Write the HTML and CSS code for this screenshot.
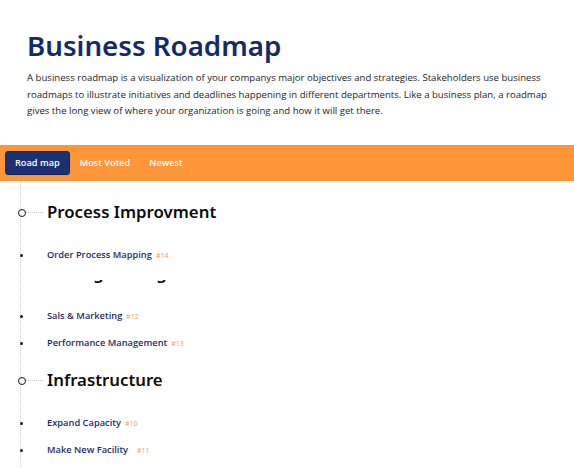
FILE: index.html
```html
<!DOCTYPE html>
<html lang="en">
<head>
<meta charset="utf-8">
<title>Business Roadmap</title>
<link rel="stylesheet" href="styles.css">
</head>
<body>
<header class="intro">
  <h1 class="intro-title">Business Roadmap</h1>
  <p class="intro-text">A business roadmap is a visualization of your companys major objectives and strategies. Stakeholders use business roadmaps to illustrate initiatives and deadlines happening in different departments. Like a business plan, a roadmap gives the long view of where your organization is going and how it will get there.</p>
</header>
<nav class="tabs">
  <a class="tab tab-active" href="#">Road map</a>
  <a class="tab" href="#">Most Voted</a>
  <a class="tab" href="#">Newest</a>
</nav>
<main class="roadmap">
  <section class="group">
    <h2 class="group-title">Process Improvment</h2>
    <ul class="items">
      <li class="item"><a class="item-link" href="#">Order Process Mapping</a><span class="item-num">#14</span></li>
    </ul>
  </section>
  <section class="group group-covered">
    <h2 class="group-title">Pricing Settings</h2>
    <ul class="items">
      <li class="item"><a class="item-link" href="#">Sals &amp; Marketing</a><span class="item-num">#12</span></li>
      <li class="item"><a class="item-link" href="#">Performance Management</a><span class="item-num">#13</span></li>
    </ul>
  </section>
  <section class="group">
    <h2 class="group-title">Infrastructure</h2>
    <ul class="items">
      <li class="item"><a class="item-link" href="#">Expand Capacity</a><span class="item-num">#10</span></li>
      <li class="item"><a class="item-link" href="#">Make New Facility</a><span class="item-num item-num-wide">#11</span></li>
    </ul>
  </section>
</main>
</body>
</html>
```
FILE: styles.css
```css
* { box-sizing: border-box; }
html, body { margin: 0; padding: 0; background: #fff; }
body { font-family: "Open Sans", "Liberation Sans", sans-serif; color: #222; overflow: hidden; }

.intro { padding: 28px 27px 0 27px; }
.intro-title {
  margin: 0;
  font-family: "Noto Sans", sans-serif;
  font-weight: 600;
  font-size: 27.7px;
  line-height: 34px;
  color: #132b6b;
}
.intro-text {
  margin: 8px 0 0 0;
  font-size: 9.6px;
  line-height: 16.5px;
  color: #1e1e1e;
  max-width: 532px;
}

.tabs {
  margin-top: 25px;
  background: #fd9539;
  padding: 6px 5px;
  display: flex;
  gap: 1px;
  height: 36px;
}
.tab {
  display: flex;
  align-items: center;
  height: 24px;
  padding: 0 9px;
  color: #fff;
  text-decoration: none;
  font-size: 9.2px;
  font-weight: 600;
  border-radius: 3px;
}
.tab-active { background: #1c3174; border: 1px solid #13255c; }

.roadmap {
  margin-left: 20px;
  border-left: 1px dotted #d4d4d4;
  padding-top: 19px;
  padding-left: 26px;
  min-height: 300px;
}
.group { margin-top: 17px; }
.group:first-child { margin-top: 0; }
.group-title {
  position: relative;
  margin: 0;
  font-family: "Noto Sans", sans-serif;
  font-weight: 600;
  font-size: 16.8px;
  line-height: 24px;
  color: #0c0c0c;
}
.group-title::before {
  content: "";
  position: absolute;
  left: -29px;
  top: 9px;
  width: 6px;
  height: 6px;
  border: 1.5px solid #111;
  border-radius: 50%;
  background: #fff;
}
.group-title::after {
  content: "";
  position: absolute;
  left: -23px;
  top: 12px;
  width: 19px;
  border-top: 1px dotted #cfcfcf;
}
.group-covered { margin-top: -2px; }
.group-covered .group-title::before {
  left: -25px; top: 0; width: 300px; height: 19px;
  border: 0; border-radius: 0; background: #fff;
}
.group-covered .group-title::after { display: none; }

.items {
  list-style: none;
  margin: 23px 0 0 0;
  padding: 0;
  display: flex;
  flex-direction: column;
  gap: 11px;
}
.item {
  position: relative;
  display: flex;
  align-items: baseline;
  gap: 4px;
  height: 16px;
  line-height: 16px;
}
.item::before {
  content: "";
  position: absolute;
  left: -27px;
  top: 7px;
  width: 3px;
  height: 3px;
  border-radius: 50%;
  background: #111;
}
.item-link {
  font-size: 9.3px;
  font-weight: 600;
  color: #1d2d68;
  text-decoration: none;
}
.item-num {
  font-size: 7px;
  color: #f59a5a;
}
.item-num-wide { margin-left: 5px; }
```
